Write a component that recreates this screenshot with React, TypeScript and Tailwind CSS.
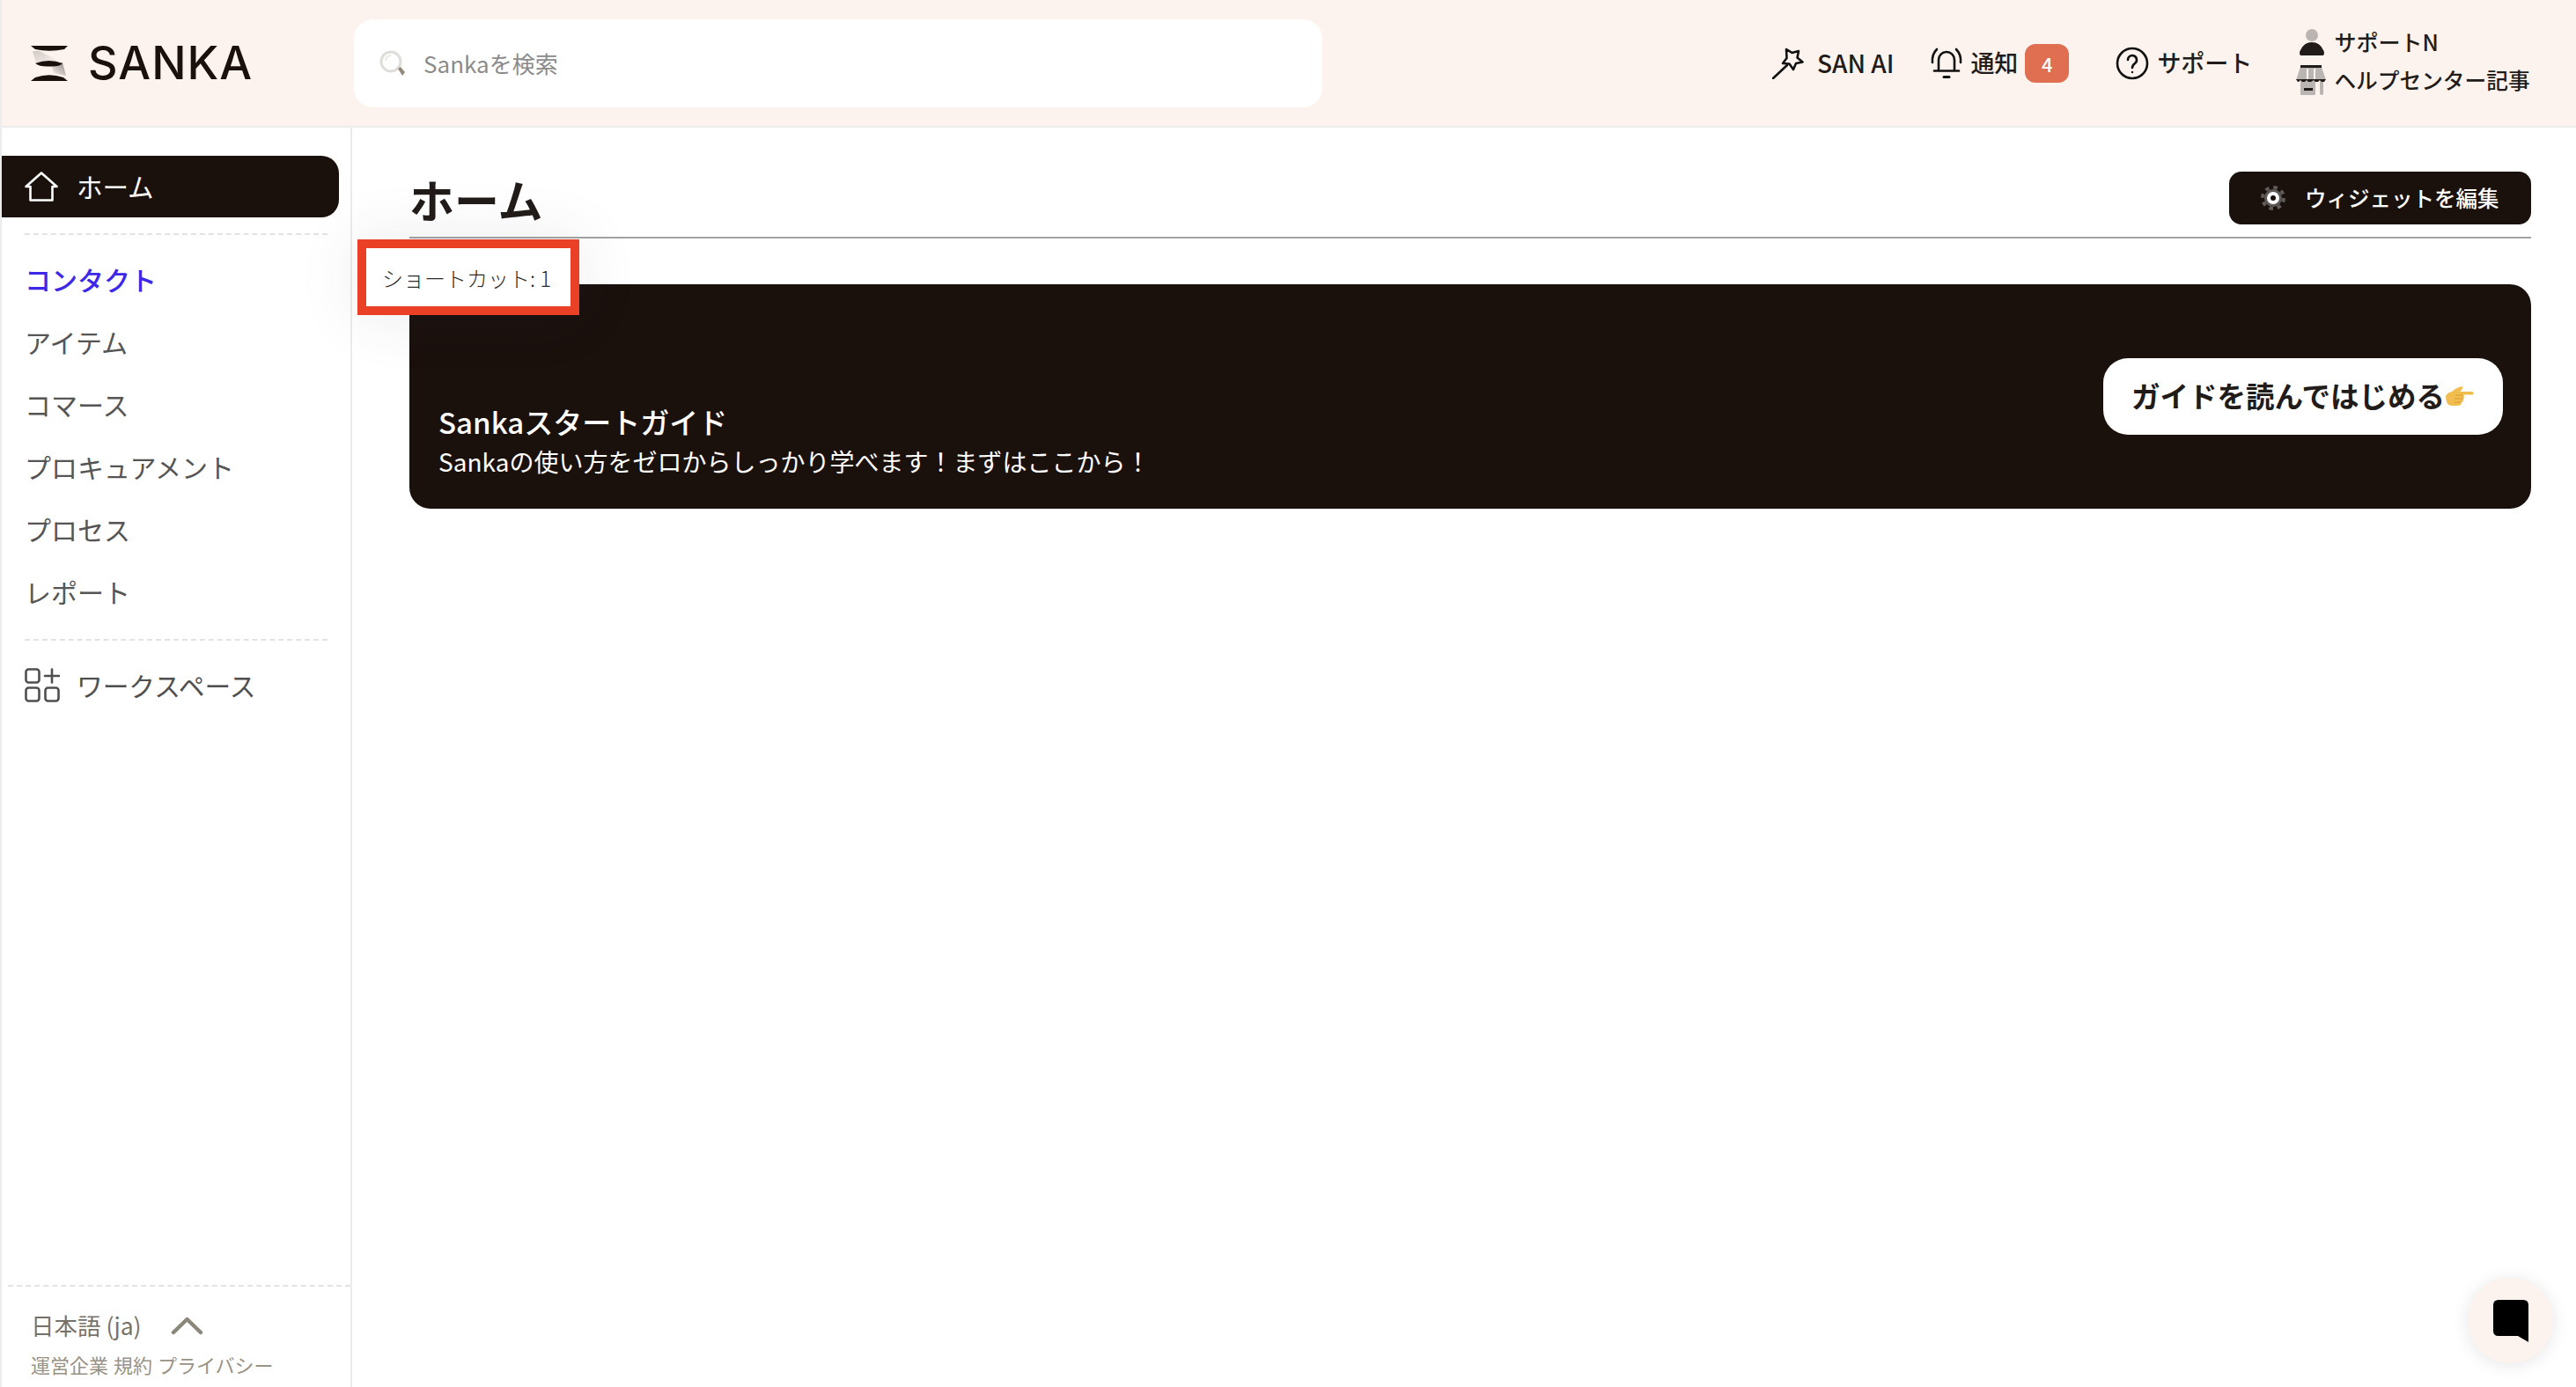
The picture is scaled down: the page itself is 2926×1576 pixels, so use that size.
import React from "react";

const Logo = () => (
  <svg width="42" height="40" viewBox="10 11 42 40" className="shrink-0">
    <defs>
      <linearGradient id="lg1" x1="0" y1="0" x2="1" y2="1">
        <stop offset="0" stopColor="#cfcac6" />
        <stop offset="1" stopColor="#fdf3ee" />
      </linearGradient>
      <linearGradient id="lg2" x1="1" y1="0" x2="0" y2="1">
        <stop offset="0" stopColor="#8f8a86" />
        <stop offset="1" stopColor="#fdf3ee" />
      </linearGradient>
    </defs>
    <polygon points="12,17 20,17 46,31 40,31 16,31" fill="url(#lg1)" />
    <polygon points="34,34 46,30 50,45 36,42" fill="url(#lg2)" />
    <path d="M10 11H52L48 15Q31 18.5 15 15Z" fill="#1a110d" />
    <path d="M15 31Q31 25 46 31Q43 35 31 34.5Q20 35 15 31Z" fill="#1a110d" />
    <path d="M10 51H52L47 47Q31 41.5 15 47Z" fill="#1a110d" />
  </svg>
);

const SearchIcon = () => (
  <svg width="30" height="30" viewBox="0 0 30 30" className="shrink-0">
    <circle cx="13" cy="13" r="11" fill="#fff" stroke="#dfddd9" strokeWidth="3" />
    <path d="M7 12a6 6 0 0 1 6-6" fill="none" stroke="#ebe9e6" strokeWidth="2" />
    <path d="M21 21l3-2 5 6-3 4z" fill="#94897a" />
  </svg>
);

const Wand = () => (
  <svg width="38" height="37" viewBox="0 0 38 37" fill="none" stroke="#111" strokeWidth="2.6" strokeLinejoin="round" strokeLinecap="round" className="shrink-0">
    <path d="M16 3l6.5 4 7.500-2-1.500 7.500 6 5-7.500 1.500-3 7-4.500-6.500-7.500-.5 4.500-6z" />
    <path d="M1 36l16-15" />
  </svg>
);

const Bell = () => (
  <svg width="38" height="36" viewBox="0 0 38 36" fill="none" stroke="#111" strokeWidth="2.600" strokeLinecap="round" className="shrink-0">
    <path d="M10 25V14a9 9 0 0 1 18 0v11" />
    <path d="M5 26.500h28" />
    <path d="M3 17Q2 8 8 2M35 17Q36 8 30 2" />
    <path d="M16 33.500h6" strokeWidth="3" />
  </svg>
);

const Help = () => (
  <svg width="38" height="38" viewBox="0 0 38 38" fill="none" stroke="#111" strokeWidth="2.600" strokeLinecap="round" className="shrink-0">
    <circle cx="19" cy="19" r="17" />
    <path d="M14 15a5 5 0 1 1 8 4c-2 1.500-3 2.500-3 5" />
    <circle cx="19" cy="29" r="1.200" fill="#111" stroke="none" />
  </svg>
);

const Person = () => (
  <svg width="28" height="30" viewBox="0 0 28 30" className="shrink-0">
    <circle cx="14" cy="7" r="7" fill="#bab5b2" />
    <path d="M1 30Q-1 27 1 24Q5 15 14 15Q23 15 27 24Q29 27 27 30Z" fill="#211c19" />
  </svg>
);

const Store = () => (
  <svg width="34" height="34" viewBox="0 0 34 34" className="shrink-0">
    <rect x="5" y="14" width="17" height="20" rx="1" fill="#bab5b2" />
    <rect x="27" y="15" width="4" height="19" rx="2" fill="#bab5b2" />
    <polygon points="5,2 29,2 34,17 0,17" fill="#bab5b2" />
    <rect x="12" y="4" width="2" height="12" fill="#fdf3ee" />
    <rect x="20" y="4" width="2" height="12" fill="#fdf3ee" />
    <rect x="5" y="0" width="24" height="3" fill="#211c19" />
    <path d="M0 16h34l-2 3h-3l-2-2-2 2h-3l-2-2-3 2h-3l-2-2-2 2h-3l-2-2-2 2H2z" fill="#211c19" />
    <rect x="9" y="26" width="10" height="3" fill="#211c19" />
  </svg>
);

const Gear = () => (
  <svg width="28" height="28" viewBox="0 0 28 28" className="shrink-0">
    <circle cx="14" cy="14" r="10" fill="#5f5b58" />
    <circle cx="14" cy="14" r="12" fill="none" stroke="#5f5b58" strokeWidth="4" strokeDasharray="4.500 4.925" />
    <circle cx="14" cy="14" r="7" fill="#fff" />
    <circle cx="14" cy="14" r="3" fill="#1a110d" />
  </svg>
);

const Home = () => (
  <svg width="38" height="34" viewBox="0 0 38 34" fill="none" stroke="#fff" strokeWidth="2.600" strokeLinejoin="round" className="shrink-0">
    <path d="M1.500 17L19 1.500 36.500 17H31.500V32.500H6.500V17Z" />
  </svg>
);

const Workspace = () => (
  <svg width="40" height="39" viewBox="0 0 40 39" fill="none" stroke="#4f4f4f" strokeWidth="2.600" strokeLinecap="round" className="shrink-0">
    <rect x="1.500" y="1.500" width="15" height="15" rx="3" />
    <rect x="1.500" y="22.500" width="15" height="15" rx="3" />
    <rect x="23.500" y="22.500" width="15" height="15" rx="3" />
    <path d="M31 1.500v15M23 9h16" />
  </svg>
);

const Hand = () => (
  <svg width="34" height="24" viewBox="0 0 34 24" className="shrink-0">
    <path d="M1 12Q3 8 8 7Q13 2 20 1Q21 4 17 7H31Q34 8 32 10.500H21Q23 13 21 15Q22 18 19 19Q19 23 14 23H7Q1 22 1 12Z" fill="#f2bd4f" />
    <path d="M12 11h9M11 15h10M11 19h8" stroke="#d99c33" strokeWidth="1" fill="none" />
  </svg>
);

const navItems = ["アイテム", "コマース", "プロキュアメント", "プロセス", "レポート"];

export default function App() {
  return (
    <div className="flex h-[1576px] w-[2926px] flex-col overflow-hidden border-l-2 border-[#ececec] bg-white font-['Noto_Sans_CJK_JP','Noto_Sans',sans-serif] text-[#211c19]">
      <header className="flex h-[145px] shrink-0 items-center border-b-2 border-[#ececec] bg-[#fdf3ee]">
        <div className="ml-[33px] flex w-[297px] items-center">
          <Logo />
          <span className="ml-[23px] font-['Inter',sans-serif] text-[52px] leading-none font-medium tracking-[1px] text-[#1a110d]">SANKA</span>
        </div>
        <div className="ml-[70px] flex h-[100px] w-[1100px] items-center rounded-[22px] bg-white pl-[29px]">
          <SearchIcon />
          <span className="ml-[20px] text-[26px] leading-none text-[#8b8b8b]">Sankaを検索</span>
        </div>
        <div className="ml-[511px] flex items-center">
          <Wand />
          <span className="mb-[2px] ml-[13px] text-[28px] leading-none font-medium">SAN AI</span>
        </div>
        <div className="ml-[41px] flex items-center">
          <Bell />
          <span className="mb-[2px] ml-[8px] text-[27px] leading-none font-medium">通知</span>
          <span className="ml-[8px] flex h-[44px] w-[50px] items-center justify-center rounded-[12px] bg-[#e06e50] text-[22px] leading-none font-medium text-white">4</span>
        </div>
        <div className="ml-[53px] flex items-center">
          <Help />
          <span className="mb-[2px] ml-[9px] text-[27px] leading-none font-medium">サポート</span>
        </div>
        <div className="mb-[4px] ml-[50px] flex flex-col gap-[10px]">
          <div className="flex h-[32px] items-center pl-[4px]">
            <Person />
            <span className="ml-[11px] text-[25px] leading-none font-medium">サポートN</span>
          </div>
          <div className="flex h-[34px] items-center">
            <Store />
            <span className="ml-[9px] text-[24.7px] leading-none font-medium">ヘルプセンター記事</span>
          </div>
        </div>
      </header>

      <div className="flex min-h-0 flex-1">
        <aside className="flex w-[398px] shrink-0 flex-col border-r-2 border-[#ececec]">
          <a className="mt-[32px] flex h-[70px] w-[383px] items-center rounded-r-[20px] bg-[#1a110d] pl-[26px] text-white">
            <Home />
            <span className="ml-[21px] text-[29.5px] leading-none">ホーム</span>
          </a>
          <div className="mt-[18px] ml-[26px] w-[344px] border-t-2 border-dashed border-[#e3e3e3]" />
          <nav className="mt-[14px] flex flex-col">
            <a className="flex h-[71px] items-center pl-[26px] text-[30px] leading-none font-medium text-[#3d28e8]">コンタクト</a>
            {navItems.map((t) => (
              <a key={t} className="flex h-[71px] items-center pl-[26px] text-[30px] leading-none text-[#555]">{t}</a>
            ))}
          </nav>
          <div className="mt-[19px] ml-[26px] w-[344px] border-t-2 border-dashed border-[#e3e3e3]" />
          <a className="mt-[15px] flex h-[71px] items-center pl-[26px] text-[#4f4f4f]">
            <Workspace />
            <span className="ml-[19px] text-[29.7px] leading-none">ワークスペース</span>
          </a>
          <div className="mt-auto ml-[7px] border-t-2 border-dashed border-[#e3e3e3] pt-[27px] pl-[26px]">
            <div className="flex h-[34px] items-center">
              <span className="text-[26.5px] leading-none text-[#76726a]">日本語 (ja)</span>
              <svg width="37" height="21" viewBox="0 0 37 21" fill="none" stroke="#8c877b" strokeWidth="4.500" strokeLinecap="round" strokeLinejoin="round" className="ml-[33px]">
                <path d="M3 18L18.500 3 34 18" />
              </svg>
            </div>
            <div className="mt-[13px] flex h-[28px] items-center gap-[6px] text-[22px] leading-none text-[#999286]">
              <span>運営企業</span>
              <span>規約</span>
              <span>プライバシー</span>
            </div>
            <div className="h-[12px]" />
          </div>
        </aside>

        <main className="relative flex-1 pr-[51px] pl-[65px]">
          <div className="flex h-[126px] items-start justify-between border-b-2 border-[#a3a3a3] pt-[50px]">
            <h1 className="mt-[3px] text-[51px] leading-[56px] font-bold text-[#211c19]">ホーム</h1>
            <button className="flex h-[60px] w-[343px] items-center rounded-[14px] bg-[#1a110d] pl-[36px] text-white">
              <Gear />
              <span className="ml-[22px] text-[24.5px] leading-none font-medium">ウィジェットを編集</span>
            </button>
          </div>

          <section className="mt-[52px] flex h-[255px] items-center justify-between rounded-[24px] bg-[#1a110d] pr-[32px] pl-[33px] text-white">
            <div className="self-end pb-[34px]">
              <div className="mb-[3px] text-[33px] leading-[44px] font-medium">Sankaスタートガイド</div>
              <div className="text-[28px] leading-[40px]">Sankaの使い方をゼロからしっかり学べます！まずはここから！</div>
            </div>
            <button className="flex h-[87px] w-[454px] items-center justify-center rounded-[28px] bg-white pb-[2px] text-[32.5px] leading-none font-bold text-[#211c19]">
              ガイドを読んではじめる
              <Hand />
            </button>
          </section>

          <div className="absolute top-[127px] left-[6px] flex h-[86px] w-[252px] items-center border-[10px] border-[#ea4025] bg-white pt-[2px] pl-[18px] text-[24px] leading-none font-light text-[#2c2c2c] shadow-[0_0_70px_rgba(60,60,90,0.10)]">
            ショートカット: 1
          </div>
        </main>
      </div>

      <button className="absolute top-[1452px] left-[2803px] flex h-[97px] w-[97px] items-center justify-center rounded-full bg-[#fdf3ee] shadow-[0_2px_20px_rgba(0,0,0,0.10)]">
        <svg width="40" height="48" viewBox="0 0 40 48">
          <path d="M6 0H34Q40 0 40 6V48L28 41H6Q0 41 0 35V6Q0 0 6 0Z" fill="#000" />
        </svg>
      </button>
    </div>
  );
}
